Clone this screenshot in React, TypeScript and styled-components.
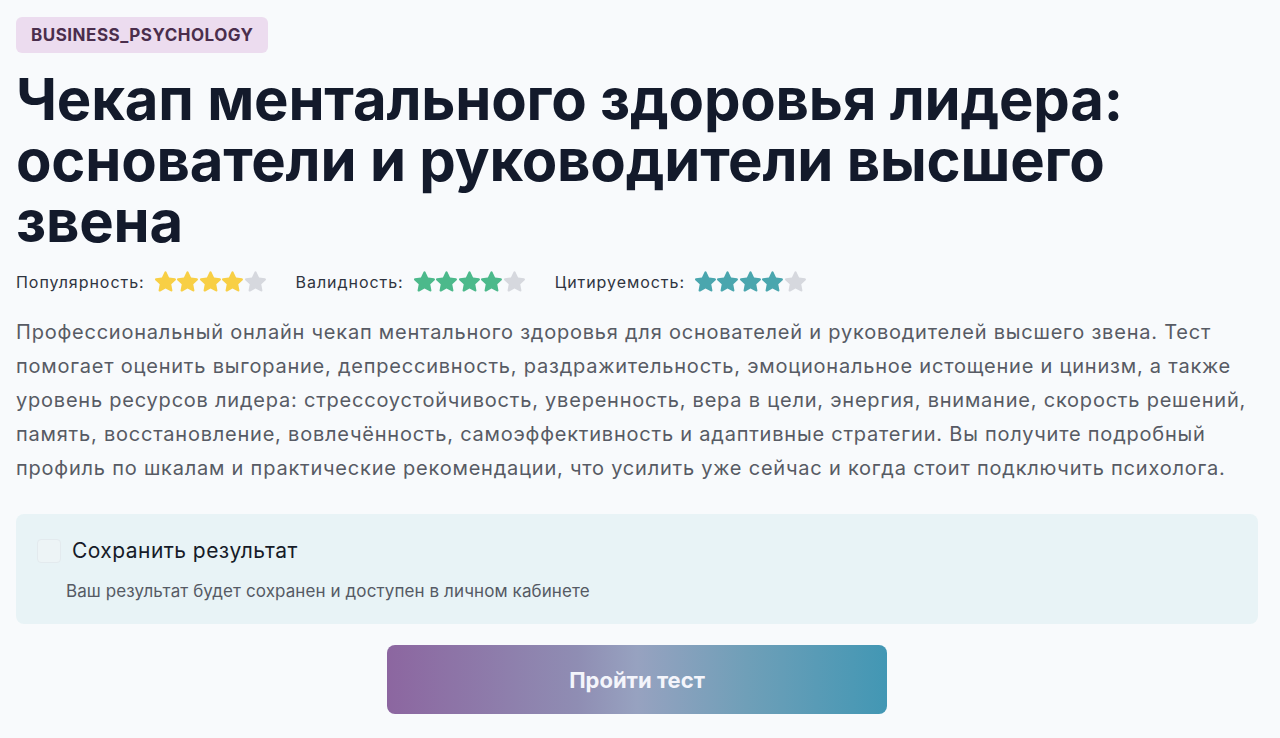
import { FC } from "react";
import styled, { createGlobalStyle } from "styled-components";

const GlobalStyle = createGlobalStyle`
  html, body {
    margin: 0;
    padding: 0;
    background-color: #f8fafc;
  }
  body {
    font-family: Inter, "Noto Sans", "Liberation Sans", sans-serif;
    -webkit-font-smoothing: antialiased;
  }
  * {
    box-sizing: border-box;
  }
`;

const Page = styled.div`
  padding: 17px 22px 24px 16px;
  display: flex;
  flex-direction: column;
`;

const Badge = styled.span`
  align-self: flex-start;
  padding: 8px 15px;
  border-radius: 6px;
  background-color: #ecdcef;
  color: #4a2e4c;
  font-size: 17px;
  font-weight: 700;
  line-height: 20px;
  letter-spacing: 0.5px;
`;

const Title = styled.h1`
  margin: 16px 0 0;
  max-width: 1160px;
  color: #131a2b;
  font-size: 58px;
  font-weight: 700;
  line-height: 61px;
  letter-spacing: -0.2px;
`;

const Ratings = styled.div`
  display: flex;
  align-items: center;
  gap: 30px;
  margin-top: 19px;
`;

const Rating = styled.div`
  display: flex;
  align-items: center;
  gap: 10px;
  & > span {
    color: #2f3440;
    font-size: 16px;
    line-height: 20px;
    letter-spacing: 0.95px;
  }
`;

const Stars = styled.div`
  display: flex;
  gap: 1.5px;
`;

const Description = styled.p`
  margin: 23px 0 0;
  color: #575b64;
  font-size: 20px;
  line-height: 34px;
  letter-spacing: 0.78px;
`;

const SaveCard = styled.div`
  margin-top: 29px;
  padding: 24px 21px 22px;
  border-radius: 8px;
  background-color: #e8f3f6;
  display: flex;
  flex-direction: column;
  gap: 16px;
`;

const CheckRow = styled.label`
  display: flex;
  align-items: center;
  gap: 11px;
  cursor: pointer;
  & > span {
    color: #161b28;
    font-size: 21px;
    line-height: 26px;
    letter-spacing: 0.45px;
  }
`;

const CheckBox = styled.span`
  width: 24px;
  height: 24px;
  border-radius: 4px;
  border: 1px solid #e3eaee;
  background-color: #edf4f6;
`;

const Hint = styled.p`
  margin: 0 0 0 29px;
  color: #555a64;
  font-size: 17px;
  line-height: 22px;
  letter-spacing: 0.1px;
`;

const StartButton = styled.button`
  align-self: center;
  margin-top: 21px;
  width: 500px;
  height: 69px;
  border: 0;
  border-radius: 8px;
  background: linear-gradient(90deg, #8c66a0 0%, #8f8db3 38%, #97a2c0 50%, #6f9fb8 72%, #4297b4 100%);
  color: #f4f5fb;
  font-family: Inter, "Noto Sans", "Liberation Sans", sans-serif;
  font-size: 22px;
  font-weight: 700;
  cursor: pointer;
`;

const Star: FC<{ color: string }> = ({ color }) => (
  <svg width="21" height="21" viewBox="2.6 2 18.8 18.6">
    <path
      d="M12 2.2c.4 0 .75.23.9.6l2.3 4.9 5.3.65c.85.1 1.2 1.15.57 1.74l-3.9 3.7 1 5.27c.16.85-.73 1.5-1.48 1.08L12 17.55l-4.7 2.6c-.75.42-1.64-.23-1.48-1.08l1-5.27-3.9-3.7c-.63-.6-.28-1.64.57-1.74l5.3-.65 2.3-4.9c.16-.37.5-.6.9-.6z"
      fill={color}
    />
  </svg>
);

const RatingStars: FC<{ value: number; color: string }> = ({ value, color }) => (
  <Stars>
    {[0, 1, 2, 3, 4].map((i) => (
      <Star key={i} color={i < value ? color : "#d6d8de"} />
    ))}
  </Stars>
);

const ratings = [
  { label: "Популярность:", value: 4, color: "#f8cf45" },
  { label: "Валидность:", value: 4, color: "#4cb98b" },
  { label: "Цитируемость:", value: 4, color: "#4aa6ae" },
];

const App: FC = () => {
  return (
    <>
      <GlobalStyle />
      <Page>
        <Badge>BUSINESS_PSYCHOLOGY</Badge>
        <Title>
          Чекап ментального здоровья лидера: основатели и руководители
          высшего звена
        </Title>
        <Ratings>
          {ratings.map((r) => (
            <Rating key={r.label}>
              <span>{r.label}</span>
              <RatingStars value={r.value} color={r.color} />
            </Rating>
          ))}
        </Ratings>
        <Description>
          Профессиональный онлайн чекап ментального здоровья для основателей и
          руководителей высшего звена. Тест помогает оценить выгорание,
          депрессивность, раздражительность, эмоциональное истощение и цинизм,
          а также уровень ресурсов лидера: стрессоустойчивость, уверенность,
          вера в цели, энергия, внимание, скорость решений, память,
          восстановление, вовлечённость, самоэффективность и адаптивные
          стратегии. Вы получите подробный профиль по шкалам и практические
          рекомендации, что усилить уже сейчас и когда стоит подключить
          психолога.
        </Description>
        <SaveCard>
          <CheckRow>
            <CheckBox />
            <span>Сохранить результат</span>
          </CheckRow>
          <Hint>Ваш результат будет сохранен и доступен в личном кабинете</Hint>
        </SaveCard>
        <StartButton>Пройти тест</StartButton>
      </Page>
    </>
  );
};

export default App;
